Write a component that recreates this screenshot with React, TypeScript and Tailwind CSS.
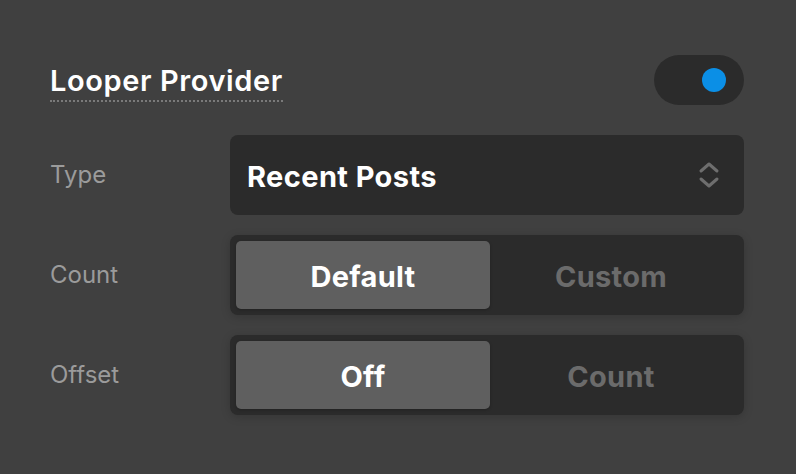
import React from "react";

function Chevrons() {
  return (
    <svg width="22" height="30" viewBox="0 0 22 30" fill="none">
      <path d="M3 11 L11 4 L19 11" stroke="#6e6e6e" strokeWidth="3" strokeLinecap="round" strokeLinejoin="round" />
      <path d="M3 19 L11 26 L19 19" stroke="#6e6e6e" strokeWidth="3" strokeLinecap="round" strokeLinejoin="round" />
    </svg>
  );
}

function Segmented({ a, b }: { a: string; b: string }) {
  return (
    <div className="flex h-[80px] flex-1 rounded-[8px] bg-[#2b2b2b] p-[6px] shadow-[0_2px_10px_rgba(0,0,0,0.18)]">
      <div className="flex w-[254px] items-center justify-center rounded-[5px] bg-[#5f5f5f] pt-[3px] text-[29px] font-bold tracking-[0.3px] text-white shadow-[0_1px_3px_rgba(0,0,0,0.25)]">
        {a}
      </div>
      <div className="flex flex-1 items-center justify-center pr-[6px] pt-[3px] text-[29px] font-bold tracking-[0.3px] text-[#6b6b6b]">
        {b}
      </div>
    </div>
  );
}

export default function App() {
  return (
    <div
      className="h-[474px] w-[796px] bg-[#404040] pl-[50px] pr-[52px] pt-[55px]"
      style={{ fontFamily: "Inter, 'Noto Sans', sans-serif" }}
    >
      <div className="flex h-[50px] items-center justify-between">
        <span className="mt-[6px] inline-block border-b-2 border-dotted border-[#7a7a7a] pb-[2px] text-[29px] font-semibold leading-[34px] tracking-[0.6px] text-white">
          Looper Provider
        </span>
        <div className="flex h-[50px] w-[90px] items-center justify-end rounded-full bg-[#2b2b2b] pr-[18px]">
          <div className="h-[24px] w-[24px] rounded-full bg-[#0b8fe6]" />
        </div>
      </div>
      <div className="mt-[30px] flex flex-col gap-[20px]">
        <div className="flex items-center">
          <div className="w-[180px] text-[24px] text-[#9b9b9b]">Type</div>
          <div className="flex h-[80px] flex-1 items-center justify-between rounded-[8px] bg-[#2b2b2b] pl-[17px] pr-[24px]">
            <span className="pt-[3px] text-[29px] font-bold tracking-[0.4px] text-white">Recent Posts</span>
            <Chevrons />
          </div>
        </div>
        <div className="flex items-center">
          <div className="w-[180px] text-[24px] text-[#9b9b9b]">Count</div>
          <Segmented a="Default" b="Custom" />
        </div>
        <div className="flex items-center">
          <div className="w-[180px] text-[24px] text-[#9b9b9b]">Offset</div>
          <Segmented a="Off" b="Count" />
        </div>
      </div>
    </div>
  );
}
